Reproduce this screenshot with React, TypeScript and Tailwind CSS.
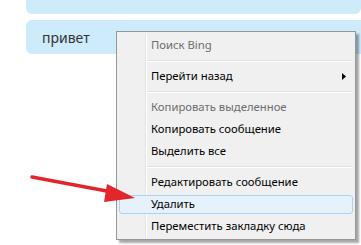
import { ReactNode } from "react";

type Item = { label: string; disabled?: boolean; submenu?: boolean; active?: boolean } | "sep";

const ITEMS: Item[] = [
  { label: "Поиск Bing", disabled: true },
  "sep",
  { label: "Перейти назад", submenu: true },
  "sep",
  { label: "Копировать выделенное", disabled: true },
  { label: "Копировать сообщение" },
  { label: "Выделить все" },
  "sep",
  { label: "Редактировать сообщение" },
  { label: "Удалить", active: true },
  { label: "Переместить закладку сюда" },
];

function MenuRow({ children, active }: { children: ReactNode; active?: boolean }) {
  return (
    <div className="relative flex h-[22px] items-center">
      {active && (
        <div className="absolute inset-x-[2px] top-[2px] bottom-[1px] rounded-[3px] border border-[#a8d4f0] bg-[#e6f2fb]" />
      )}
      {children}
    </div>
  );
}

function ContextMenu() {
  return (
    <div className="absolute left-[116px] top-[31px] w-[240px] border border-[#979797] bg-[#f0f0f0] py-[2px] shadow-[3px_3px_2px_rgba(0,0,0,0.35)]">
      {/* icon gutter */}
      <div className="absolute top-[2px] bottom-[2px] left-[28px] flex">
        <div className="w-px bg-[#e2e3e3]" />
        <div className="w-px bg-white" />
      </div>
      {ITEMS.map((it, i) =>
        it === "sep" ? (
          <div key={i} className="flex h-[9px] items-center pl-[29px] pr-[2px]">
            <div className="h-[2px] w-full border-t border-[#e0e0e0] border-b border-b-white" />
          </div>
        ) : (
          <MenuRow key={i} active={it.active}>
            <span
              className={
                "relative pl-[34px] text-[11.3px] " +
                (it.disabled ? "text-[#6d6d6d]" : "text-black")
              }
            >
              {it.label}
            </span>
            {it.submenu && (
              <svg className="absolute right-[9px] top-[8px]" width="4" height="7" viewBox="0 0 4 7">
                <path d="M0 0 L4 3.5 L0 7 Z" fill="#000" />
              </svg>
            )}
          </MenuRow>
        )
      )}
    </div>
  );
}

export default function App() {
  return (
    <div
      className="relative h-[245px] w-[361px] overflow-hidden bg-white"
      style={{ fontFamily: '"Noto Sans", "Open Sans", sans-serif' }}
    >
      <div className="ml-[26px] h-[14px] rounded-b-[6px] bg-[#cdebfb]" />
      <div className="ml-[26px] mt-[6px] mr-[-10px] flex h-[34px] items-center rounded-[6px] bg-[#cdebfb] pl-[16px] text-[14px] text-[#333]">
        привет
      </div>
      <ContextMenu />
      <svg className="absolute left-0 top-0" width="361" height="245" viewBox="0 0 361 245">
        <line x1="32" y1="177" x2="112" y2="192" stroke="#e2262b" strokeWidth="3.5" strokeLinecap="round" />
        <path d="M135 198 L107 184 L104 202 Z" fill="#e2262b" />
      </svg>
    </div>
  );
}
